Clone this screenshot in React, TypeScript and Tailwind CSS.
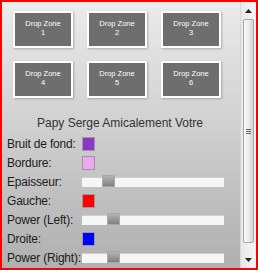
import React from "react";

const zones = [1, 2, 3, 4, 5, 6];

function Slider({ pos }: { pos: number }) {
  return (
    <div className="relative h-[10px] w-[142px] shrink-0 border-t border-[#d0d0d0] bg-[#f6f6f6]">
      <div
        className="absolute top-[-3px] h-[12px] w-[13px] border border-[#a8a8a8] bg-gradient-to-b from-[#b4b4b4] to-[#808080]"
        style={{ left: pos }}
      />
    </div>
  );
}

function Swatch({ color }: { color: string }) {
  return <div className="h-[14px] w-[13px] shrink-0 border border-[#9a9a9a]" style={{ background: color }} />;
}

export default function App() {
  const rows: { label: string; el: React.ReactNode }[] = [
    { label: "Bruit de fond:", el: <Swatch color="#8a37c6" /> },
    { label: "Bordure:", el: <Swatch color="#f0a6f0" /> },
    { label: "Epaisseur:", el: <Slider pos={20} /> },
    { label: "Gauche:", el: <Swatch color="#ff0000" /> },
    { label: "Power (Left):", el: <Slider pos={25} /> },
    { label: "Droite:", el: <Swatch color="#0000ff" /> },
    { label: "Power (Right):", el: <Slider pos={25} /> },
  ];
  return (
    <div
      className="flex h-[270px] w-[258px] overflow-hidden border-2 border-[#ff0000] bg-gradient-to-b from-[#ececec] to-[#b0b0b0]"
      style={{ fontFamily: '"Liberation Sans", Arial, sans-serif' }}
    >
      <div className="flex-1 overflow-hidden">
        <div className="ml-[11px] mt-[9px] grid w-[208px] grid-cols-[60px_60px_60px] gap-x-[14px] gap-y-[13px]">
          {zones.map((z) => (
            <div
              key={z}
              className="flex h-[37px] flex-col items-center border-2 border-white bg-[#6e6e6e] pt-[6px] text-center text-[7.5px] leading-[9px] text-white shadow-[1px_1px_2px_rgba(0,0,0,0.25)]"
            >
              <span>Drop Zone</span>
              <span>{z}</span>
            </div>
          ))}
        </div>
        <div className="mt-[18px] pr-[2px] text-center text-[12px] leading-[14px] text-[#333]">
          Papy Serge Amicalement Votre
        </div>
        <div className="mt-[4px] flex flex-col pl-[5px]">
          {rows.map((r) => (
            <div key={r.label} className="flex h-[19px] items-center">
              <div className="w-[75px] shrink-0 whitespace-nowrap text-[12px] leading-[14px] tracking-[-0.2px] text-[#1c1c1c]">
                {r.label}
              </div>
              {r.el}
            </div>
          ))}
        </div>
      </div>
      <div className="flex w-[16px] flex-col border-l border-[#d8d8d8] bg-gradient-to-r from-[#e8e8e8] to-[#f6f6f6]">
        <div className="flex h-[17px] items-center justify-center">
          <svg width="7" height="4" viewBox="0 0 7 4">
            <path d="M3.5 0 L7 4 L0 4 Z" fill="#222" />
          </svg>
        </div>
        <div className="mx-[2px] flex h-[224px] items-center justify-center rounded-[2px] border border-[#a8a8a8] bg-gradient-to-r from-[#fafafa] via-[#ececec] to-[#d4d4d4]">
          <div className="flex flex-col gap-[1px]">
            <div className="h-[1px] w-[5px] bg-[#666]" />
            <div className="h-[1px] w-[5px] bg-[#666]" />
            <div className="h-[1px] w-[5px] bg-[#666]" />
          </div>
        </div>
        <div className="flex-1" />
        <div className="flex h-[17px] items-center justify-center">
          <svg width="7" height="4" viewBox="0 0 7 4">
            <path d="M0 0 L7 0 L3.5 4 Z" fill="#222" />
          </svg>
        </div>
      </div>
    </div>
  );
}
